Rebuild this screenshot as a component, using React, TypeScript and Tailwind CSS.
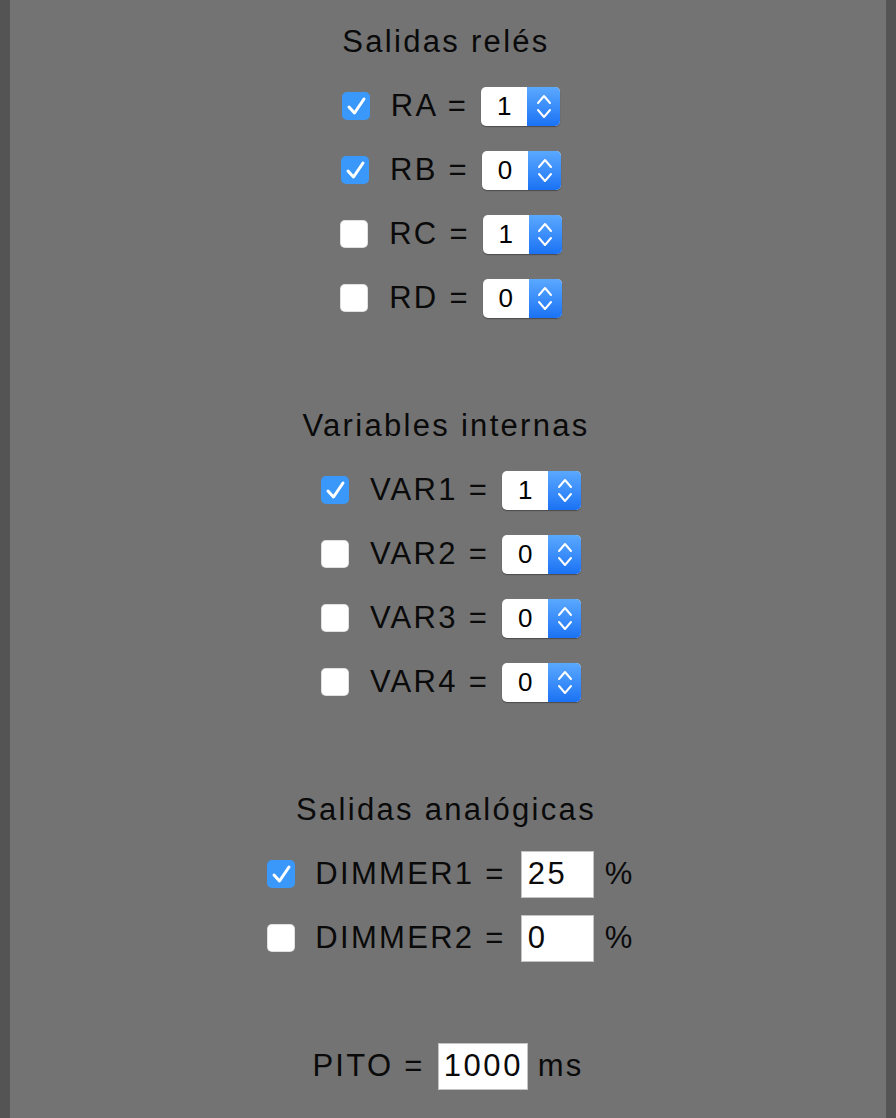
import React from "react";

function Check({ checked }: { checked: boolean }) {
  return checked ? (
    <span className="flex h-[28px] w-[28px] shrink-0 items-center justify-center rounded-[5px] bg-[#3b98fb]">
      <svg width="28" height="28" viewBox="0 0 28 28" fill="none">
        <path d="M7 15l5.5 6L22 7" stroke="white" strokeWidth="3" strokeLinecap="round" strokeLinejoin="round" />
      </svg>
    </span>
  ) : (
    <span className="h-[28px] w-[28px] shrink-0 rounded-[5px] bg-white shadow-[inset_0_0_0_1px_rgba(0,0,0,0.12)]" />
  );
}

function Stepper({ value }: { value: string }) {
  return (
    <span className="ml-[13px] flex h-[39px] w-[79px] overflow-hidden rounded-[5px] bg-white shadow-[0_1px_1px_rgba(0,0,0,0.35)]">
      <span className="flex flex-1 items-center justify-center text-[26px] tracking-normal text-black">{value}</span>
      <span className="flex w-[33px] items-center justify-center bg-gradient-to-b from-[#5aa8ff] to-[#1a72f4]">
        <svg width="16" height="26" viewBox="0 0 16 26" fill="none" stroke="white" strokeWidth="2" strokeLinecap="round" strokeLinejoin="round">
          <path d="M2 10l6-7 6 7M2 17l6 7 6-7" />
        </svg>
      </span>
    </span>
  );
}

function Line({ children, className = "" }: { children: React.ReactNode; className?: string }) {
  return <div className={`flex h-[64px] items-center justify-center ${className}`}>{children}</div>;
}

const relays = [
  { name: "RA", on: true, value: "1" },
  { name: "RB", on: true, value: "0" },
  { name: "RC", on: false, value: "1" },
  { name: "RD", on: false, value: "0" },
];

const vars = [
  { name: "VAR1", on: true, value: "1" },
  { name: "VAR2", on: false, value: "0" },
  { name: "VAR3", on: false, value: "0" },
  { name: "VAR4", on: false, value: "0" },
];

const dimmers = [
  { name: "DIMMER1", on: true, value: "25" },
  { name: "DIMMER2", on: false, value: "0" },
];

export default function App() {
  return (
    <div className="min-h-screen bg-[#545454] px-[10px] font-[family-name:'Liberation_Sans',Arial,sans-serif] text-[31px] tracking-[2.3px] text-[#0a0a0a]">
      <div className="min-h-screen bg-[#737373] pt-[10px]">
        <Line className="pr-[4px]">Salidas relés</Line>
        {relays.map((r) => (
          <Line key={r.name} className="pl-[6px]">
            <Check checked={r.on} />
            <span className="ml-[21px]">{r.name} =</span>
            <Stepper value={r.value} />
          </Line>
        ))}
        <div className="h-[64px]" />
        <Line className="pr-[4px]">Variables internas</Line>
        {vars.map((r) => (
          <Line key={r.name} className="pl-[6px]">
            <Check checked={r.on} />
            <span className="ml-[21px]">{r.name} =</span>
            <Stepper value={r.value} />
          </Line>
        ))}
        <div className="h-[64px]" />
        <Line className="pr-[4px]">Salidas analógicas</Line>
        {dimmers.map((d) => (
          <Line key={d.name} className="pl-[6px]">
            <Check checked={d.on} />
            <span className="ml-[20px]">{d.name} =</span>
            <span className="ml-[15px] flex h-[47px] w-[73px] items-center border border-[#c4c4c4] bg-white pl-[6px] text-[31px] tracking-[2.6px]">
              {d.value}
            </span>
            <span className="ml-[11px]">%</span>
          </Line>
        ))}
        <div className="h-[64px]" />
        <Line>
          <span>PITO =</span>
          <span className="ml-[13px] flex h-[47px] w-[90px] items-center border border-[#c4c4c4] bg-white pl-[5px] text-[31px] tracking-[2.6px]">
            1000
          </span>
          <span className="ml-[10px]">ms</span>
        </Line>
      </div>
    </div>
  );
}
